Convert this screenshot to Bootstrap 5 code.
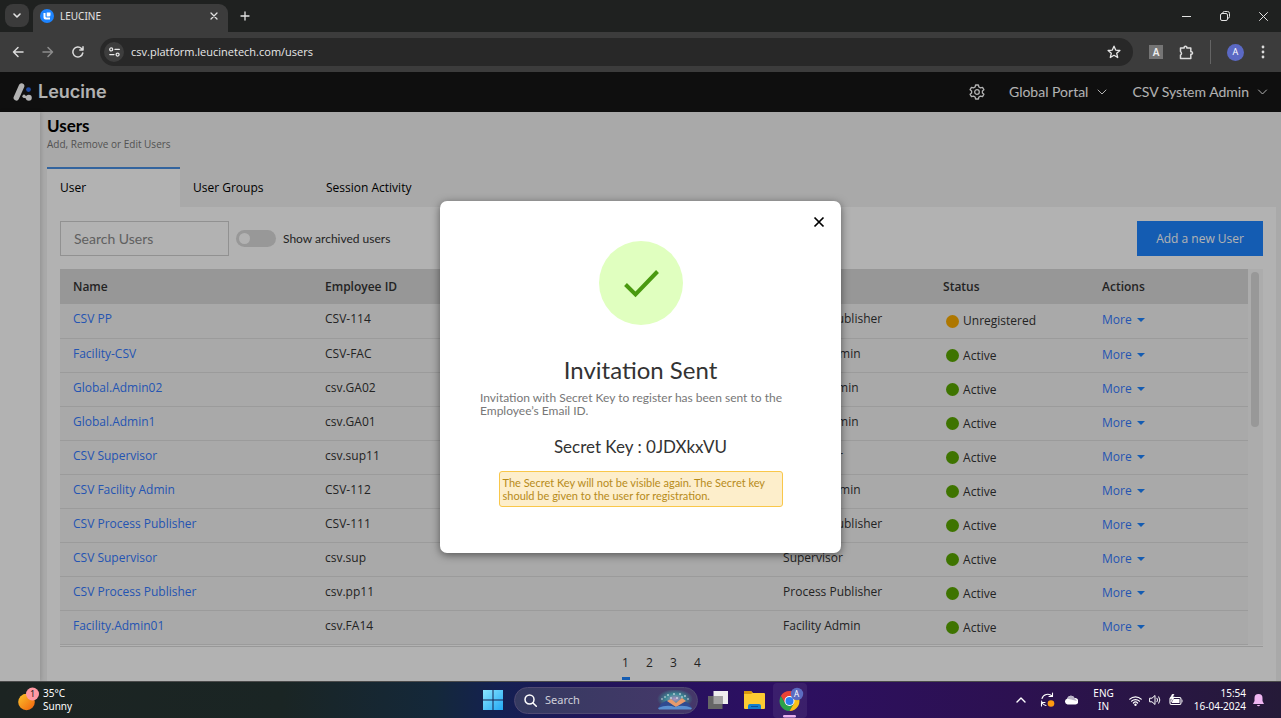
<!DOCTYPE html>
<html lang="en">
<head>
<meta charset="utf-8">
<meta name="viewport" content="width=device-width, initial-scale=1">
<title>LEUCINE</title>
<link href="https://cdn.jsdelivr.net/npm/bootstrap@5.3.0/dist/css/bootstrap.min.css" rel="stylesheet">
<style>
  body { font-family: "Open Sans", sans-serif; font-size: 12px; line-height: 16px; color: #333; height: 100vh; background: #f2f2f2; font-variant-ligatures: none; }
  button { font: inherit; color: inherit; background: none; border: 0; padding: 0; }
  svg { display: block; flex: none; }
  .sys { font-family: "Noto Sans", "Open Sans", sans-serif; font-size: 11px; line-height: 14px; }
  .ln { fill: none; stroke: currentColor; stroke-linecap: round; stroke-linejoin: round; }

  /* browser frame */
  .tabstrip { background: #1f2120; height: 32px; color: #e3e3e3; padding: 4px 13px 0 5px; }
  .tab-menu { width: 24px; height: 23px; border-radius: 8px; background: #3b3b3b; }
  .browser-tab { width: 195px; height: 28px; margin-left: 4px; border-radius: 9px 9px 0 0; background: #3c3c3c; padding: 0 10px 4px 7px; font-size: 10px; gap: 6px; }
  .win-btns { gap: 29px; }
  .toolbar { background: #3c3c3c; height: 40px; color: #dcdcdc; padding: 0 15px 0 12px; gap: 16px; }
  .nav-btns { gap: 18px; }
  .address { background: #282828; height: 28px; border-radius: 14px; color: #e8e8e8; padding: 0 12px 0 4px; gap: 7px; }
  .address input { font-family: "Open Sans", sans-serif; font-size: 11px; background: none; border: 0; color: inherit; outline: 0; padding: 0; min-width: 0; }
  .site-info { width: 20px; height: 20px; border-radius: 50%; background: #3d3d3d; }
  .ext { width: 14px; height: 14px; background: #757575; color: #eee; font-size: 10px; font-weight: 600; }
  .avatar { width: 17px; height: 17px; border-radius: 50%; background: #5b69c4; color: #fff; font-size: 9px; }

  /* application */
  .topbar { background: #161616; height: 40px; color: #fff; font: 14px/16px Lato, sans-serif; padding: 0 13px; }
  .brand { font-family: Inter, sans-serif; font-size: 18px; font-weight: 600; color: #fff; gap: 5px; }
  .rail { width: 40px; background: #fff; box-shadow: 1px 0 4px rgba(0,0,0,.15); }
  .workspace { padding: 6px 5px 0 7px; }
  .page-title { font: 700 17px/16px Lato, sans-serif; color: #000; margin: 0; }
  .page-sub { font-size: 10px; line-height: 16px; color: #777; margin: 2px 0 15px; }
  .section-tab { width: 133px; height: 40px; padding: 0 13px 1px; text-align: left; color: #000; border-top: 2px solid transparent; }
  .section-tab.active { background: #fff; border-top-color: #4a90e2; }
  .panel { background: #fff; padding: 14px 13px 0; }
  .filters { gap: 7px; }
  .filters label { font: 12px/16px Lato, sans-serif; }
  .search-box { width: 169px; height: 35px; border: 1px solid #d0d0d0; border-radius: 0; padding: 0 13px; font: 14px/16px Lato, sans-serif; background: #fff; }
  .search-box::placeholder { color: #8a8a8a; }
  .switch-input { appearance: none; width: 40px; height: 17px; margin: 0; border-radius: 9px; background: #dadada; padding: 3px; }
  .switch-input::before { content: ""; display: block; width: 11px; height: 11px; border-radius: 50%; background: #fff; }
  .add-btn { background: #1d84ff; color: #fff; width: 126px; height: 35px; border-radius: 0; }
  .table-area { margin-top: 13px; border-bottom: 1px solid #dadada; padding-bottom: 1px; }
  .user-table { table-layout: fixed; width: 100%; background: #f2f2f2; }
  .user-table th { background: #d8d8d8; height: 35px; padding: 0 13px; font-weight: 600; }
  .user-table td { height: 34px; padding: 7px 13px 0; vertical-align: top; border-bottom: 1px solid #dedede; white-space: nowrap; }
  .user-table td:nth-child(5) { padding-top: 9px; }
  .user-table td:nth-child(6) { padding-top: 8px; }
  .user-table a { color: #347aff; text-decoration: none; }
  .user-table .dropdown-toggle { display: block; color: #347aff; }
  .user-table .dropdown-toggle::after { border-top: 4px solid #1d84ff; border-left: 4px solid transparent; border-right: 4px solid transparent; margin-left: 5px; vertical-align: 2px; }
  .status { gap: 4px; padding-left: 3px; }
  .dot { width: 13px; height: 13px; border-radius: 50%; background: #5aa700; }
  .dot.pending { background: #f9ab00; }
  .scroll-track { width: 15px; padding: 3px 4px 0 3px; background: #f7f7f7; }
  .scroll-thumb { height: 155px; border-radius: 4px; background: #dadada; }
  .pager button { width: 8px; height: 33px; padding-top: 3px; border-bottom: 3px solid transparent; color: #333; }
  .pager button.active { border-color: #1d84ff; }

  /* invitation dialog */
  .backdrop-layer { position: absolute; inset: 0; background: rgba(0,0,0,.3); }
  .invite { width: 401px; font: 12px/13px Lato, sans-serif; background: #fff; border-radius: 7px; box-shadow: 0 2px 9px rgba(0,0,0,.5); padding: 15px 40px 46px; }
  .invite-close { align-self: flex-end; margin-right: -24px; color: #000; }
  .invite h2 { font-size: 24px; line-height: 30px; color: #333; font-weight: 400; margin: 30px 0 6px; }
  .invite-text { color: #777; margin: 0; }
  .secret { font-size: 17px; line-height: 24px; color: #333; margin: 18px 0 12px; }
  .notice { width: 284px; background: #fdeecb; border: 1px solid #f9c74a; border-radius: 3px; color: #b78b1a; font-size: 11px; padding: 4px 3px; }

  /* desktop taskbar */
  .taskbar { display: grid; grid-template-columns: 1fr auto 1fr; height: 37px; color: #fff; background: linear-gradient(90deg, #1c2422 0, #1a2524 22%, #14283a 34%, #142052 39%, #22145a 47%, #2d0f62 60%, #2c1150 80%, #251a38 100%); border-top: 1px solid #4a4a4a; padding: 0 9px 0 17px; }
  .two-line { line-height: 13px; }
  .tray { font-size: 10px; gap: 7px; }
  .task-search { width: 184px; height: 27px; border-radius: 14px; background: linear-gradient(90deg, #353a60, #46386a); border: 1px solid #504a72; font-size: 12px; padding: 0 4px 0 9px; margin: 0 10px; }
  .running { width: 34px; height: 35px; border-radius: 4px; background: rgba(255,255,255,.07); }
</style>
</head>
<body class="d-flex flex-column overflow-hidden">

<header class="sys">
  <div class="tabstrip d-flex">
    <button class="tab-menu d-flex align-items-center justify-content-center" aria-label="Search tabs"><svg width="8" height="6" viewBox="0 0 8 6"><path class="ln" stroke-width="1.6" d="M1 1l3 3 3-3"/></svg></button>
    <div class="browser-tab d-flex align-items-center">
      <svg width="14" height="14" viewBox="0 0 14 14"><circle cx="7" cy="7" r="7" fill="#1d84ff"/><path d="M3.500 4v4.500q0 2 2 2h4.500v-2H6.500q-1 0-1-1V4z" fill="#fff"/><path d="M6.700 3.500h3.800V6q0 1.500-1.500 1.500H6.700z" fill="#fff"/></svg>
      <span>LEUCINE</span>
      <button class="ms-auto" aria-label="Close tab"><svg width="8" height="8" viewBox="0 0 8 8"><path class="ln" stroke-width="1.300" d="M1 1l6 6M7 1L1 7"/></svg></button>
    </div>
    <button class="ms-2 ps-1 mb-1" aria-label="New tab"><svg width="10" height="10" viewBox="0 0 10 10"><path class="ln" stroke-width="1.300" d="M5 1v8M1 5h8"/></svg></button>
    <div class="win-btns d-flex align-items-center ms-auto mb-1">
      <button aria-label="Minimize"><svg width="9" height="9" viewBox="0 0 9 9"><path class="ln" d="M0 4.500h9"/></svg></button>
      <button aria-label="Restore"><svg width="10" height="10" viewBox="0 0 10 10"><rect class="ln" x=".5" y="2.500" width="7" height="7" rx="1.500"/><path class="ln" d="M2.500 2.500q0-2 2-2h3q2 0 2 2v3q0 2-2 2"/></svg></button>
      <button aria-label="Close window"><svg width="9" height="9" viewBox="0 0 9 9"><path class="ln" d="M.5.5l8 8M8.500.5l-8 8"/></svg></button>
    </div>
  </div>
  <div class="toolbar d-flex align-items-center">
    <div class="nav-btns d-flex">
      <button aria-label="Back"><svg width="12" height="12" viewBox="0 0 12 12"><path class="ln" stroke-width="1.500" d="M11 6H1.500M6 1.500L1.500 6 6 10.500"/></svg></button>
      <button class="opacity-50" aria-label="Forward"><svg width="12" height="12" viewBox="0 0 12 12"><path class="ln" stroke-width="1.500" d="M1 6h9.500M6 1.500L10.500 6 6 10.500"/></svg></button>
      <button aria-label="Reload"><svg width="12" height="12" viewBox="0 0 12 12"><path class="ln" stroke-width="1.500" d="M10.800 7A5 5 0 1 1 9.500 2.500L11 4M11 .8V4H7.800"/></svg></button>
    </div>
    <div class="address d-flex align-items-center flex-grow-1">
      <button class="site-info d-flex align-items-center justify-content-center" aria-label="Site information"><svg width="11" height="10" viewBox="0 0 11 10"><g class="ln" stroke-width="1.300"><circle cx="2.200" cy="2.400" r="1.500"/><path d="M6 2.400h4.300M.8 7.600H5"/><circle cx="8.600" cy="7.600" r="1.500"/></g></svg></button>
      <input class="flex-grow-1" type="text" aria-label="Address" value="csv.platform.leucinetech.com/users">
      <button aria-label="Bookmark"><svg width="14" height="14" viewBox="0 0 14 14"><path class="ln" stroke-width="1.300" d="M7 1.200l1.700 3.900 4.200.4-3.200 2.800 1 4.200L7 10.300l-3.700 2.200 1-4.200L1.100 5.500l4.200-.4z"/></svg></button>
    </div>
    <button class="ext d-flex align-items-center justify-content-center" aria-label="Extension A">A</button>
    <button aria-label="Extensions"><svg width="15" height="15" viewBox="0 0 15 15"><path class="ln" stroke-width="1.500" d="M1.500 3h3.700V2q1.300-1.500 2.600 0v1h4v3.700h1q1.500 1.300 0 2.600h-1V13.500H1.500V10q2-1.500 0-3.500z"/></svg></button>
    <span class="vr my-2"></span>
    <button class="avatar d-flex align-items-center justify-content-center" aria-label="Profile">A</button>
    <button aria-label="Browser menu"><svg width="6" height="14" viewBox="0 0 6 14" fill="currentColor"><circle cx="3" cy="2" r="1.400"/><circle cx="3" cy="7" r="1.400"/><circle cx="3" cy="12" r="1.400"/></svg></button>
  </div>
</header>

<div class="position-relative flex-grow-1 d-flex flex-column overflow-hidden">
  <nav class="topbar d-flex align-items-center flex-shrink-0">
    <a class="brand d-flex align-items-center text-decoration-none" href="#">
      <svg width="20" height="20" viewBox="0 0 20 20"><path d="M3.300 15.800L8.600 4" stroke="#fff" stroke-width="5.500" stroke-linecap="round"/><path d="M10.500 14.300q3 1.500 5 1" stroke="#fff" stroke-width="2.200" fill="none"/><circle cx="11" cy="14.200" r="1.600" fill="#fff"/><circle cx="15.800" cy="15.700" r="3" fill="#fff"/><circle cx="15.500" cy="7.600" r="2.400" fill="#2e6bea"/></svg>Leucine</a>
    <button class="ms-auto me-4" aria-label="Settings"><svg width="16" height="16" viewBox="0 0 16 16"><path class="ln" stroke-width="1.300" d="M6.600 1h2.800l.5 2 1.600.9 2-.6 1.400 2.400L13.400 7v2l1.500 1.300-1.400 2.400-2-.6-1.600.9-.5 2H6.600l-.5-2-1.600-.9-2 .6-1.400-2.400L2.600 9V7L1.100 5.700l1.400-2.400 2 .6L6.100 3z"/><circle class="ln" stroke-width="1.300" cx="8" cy="8" r="2.300"/></svg></button>
    <button class="d-flex align-items-center gap-2 me-4">Global Portal <svg width="12" height="7" viewBox="0 0 12 7"><path class="ln" d="M2 1l4 4 4-4"/></svg></button>
    <button class="d-flex align-items-center gap-2">CSV System Admin <svg width="11" height="7" viewBox="0 0 11 7"><path class="ln" d="M1.500 1l4 4 4-4"/></svg></button>
  </nav>

  <div class="d-flex flex-grow-1">
    <aside class="rail flex-shrink-0"></aside>
    <main class="workspace flex-grow-1 d-flex flex-column">
      <h1 class="page-title">Users</h1>
      <p class="page-sub">Add, Remove or Edit Users</p>
      <div class="d-flex" role="tablist">
        <button class="section-tab active" role="tab">User</button>
        <button class="section-tab" role="tab">User Groups</button>
        <button class="section-tab" role="tab">Session Activity</button>
      </div>
      <section class="panel flex-grow-1">
        <div class="filters d-flex align-items-center">
          <input class="search-box" type="text" placeholder="Search Users" aria-label="Search Users">
          <input class="switch-input" type="checkbox" role="switch" id="archived">
          <label for="archived">Show archived users</label>
          <button class="add-btn ms-auto">Add a new User</button>
        </div>
        <div class="table-area d-flex">
          <table class="user-table">
            <colgroup><col style="width:252px"><col style="width:170px"><col><col style="width:160px"><col style="width:159px"><col style="width:159px"></colgroup>
            <thead><tr><th>Name</th><th>Employee ID</th><th>Email</th><th>Role</th><th>Status</th><th>Actions</th></tr></thead>
            <tbody id="users"></tbody>
          </table>
          <div class="scroll-track flex-shrink-0"><div class="scroll-thumb"></div></div>
        </div>
        <div class="pager d-flex justify-content-center gap-3">
          <button class="active">1</button><button>2</button><button>3</button><button>4</button>
        </div>
      </section>
    </main>
  </div>

  <div class="backdrop-layer d-flex align-items-center justify-content-center">
    <div class="invite d-flex flex-column align-items-center" role="dialog" aria-labelledby="inviteTitle">
      <button class="invite-close" aria-label="Close"><svg width="12" height="12" viewBox="0 0 12 12"><path d="M1.500 1.500l9 9M10.500 1.500l-9 9" stroke="currentColor" stroke-width="1.700"/></svg></button>
      <svg class="mt-2" width="84" height="89" viewBox="0 0 84 89"><circle cx="42" cy="47" r="42" fill="#e0ffbf"/><path d="M26.500 48.500l10 10L58.500 35.500" fill="none" stroke="#4a9a10" stroke-width="4"/></svg>
      <h2 id="inviteTitle">Invitation Sent</h2>
      <p class="invite-text">Invitation with Secret Key to register has been sent to the Employee’s Email ID.</p>
      <p class="secret">Secret Key : 0JDXkxVU</p>
      <div class="notice">The Secret Key will not be visible again. The Secret key should be given to the user for registration.</div>
    </div>
  </div>
</div>

<footer class="taskbar sys flex-shrink-0">
  <div class="d-flex align-items-center gap-1">
    <svg width="22" height="26" viewBox="0 0 22 26"><defs><linearGradient id="sun" x1="0" y1="0" x2="1" y2="1"><stop offset="0" stop-color="#fcc42c"/><stop offset="1" stop-color="#f0600c"/></linearGradient></defs><circle cx="9.500" cy="15" r="8.300" fill="url(#sun)"/><circle cx="15.500" cy="7" r="6.500" fill="#ff99a4"/><text x="13" y="10" font-size="9" fill="#222">1</text></svg>
    <div class="two-line" style="font-size:10px">35°C<br>Sunny</div>
  </div>
  <div class="d-flex align-items-center">
    <button aria-label="Start"><svg width="22" height="20" viewBox="0 0 22 20"><defs><linearGradient id="win" x1="0" y1="0" x2="1" y2="1"><stop offset="0" stop-color="#8be6ff"/><stop offset="1" stop-color="#22a8f4"/></linearGradient></defs><path fill="url(#win)" d="M1 0h9.500v9.500H1zM11.500 0H21v9.500h-9.500zM1 10.500h9.500V20H1zM11.500 10.500H21V20h-9.500z"/></svg></button>
    <button class="task-search d-flex align-items-center"><svg width="13" height="13" viewBox="0 0 13 13"><circle class="ln" stroke-width="1.500" cx="5.500" cy="5.500" r="4.500"/><path class="ln" stroke-width="1.500" d="M9 9l3.300 3.300"/></svg><span class="ms-2 opacity-75" style="font-size:11px">Search</span>
      <svg class="ms-auto" width="36" height="20" viewBox="0 0 36 20"><defs><radialGradient id="aur"><stop offset="0" stop-color="#b08fc0"/><stop offset=".5" stop-color="#3c8a96"/><stop offset="1" stop-color="#3c8a96" stop-opacity="0"/></radialGradient></defs><ellipse cx="18" cy="9" rx="18" ry="10" fill="url(#aur)"/><path d="M1 18.500l3-5 6-3 8 6 8-6 6 3 3 5z" fill="#2f4a90"/><path d="M10 11l4-2 5 4 6-5 4 3-10 6z" fill="#e89a6c"/><path d="M1 18q9-4 17-1 8-3 17 1l-1 1.500H2z" fill="#5a8fd0"/><g fill="#fff"><circle cx="5" cy="9" r=".7"/><circle cx="8" cy="7" r=".7"/><circle cx="11" cy="5" r=".8"/><circle cx="14" cy="8" r=".8"/><circle cx="17" cy="4" r=".8"/><circle cx="20" cy="8" r=".8"/><circle cx="23" cy="4" r=".8"/><circle cx="25" cy="7" r=".7"/><circle cx="28" cy="6" r=".8"/><circle cx="31" cy="9" r=".7"/></g></svg></button>
    <button class="me-3" aria-label="Task view"><svg width="20" height="18" viewBox="0 0 20 18"><path d="M5.500 0H20v13H5.500z" fill="#eee"/><path d="M0 5h14.500v13H0z" fill="#666"/><path d="M5.500 5h9v8h-9z" fill="#a2a2a2"/></svg></button>
    <button class="me-2" aria-label="File Explorer"><svg width="21" height="18" viewBox="0 0 21 18"><path d="M0 1q0-1 1-1h6l2 2h11q1 0 1 1v14q0 1-1 1H1q-1 0-1-1z" fill="#fccb32"/><path d="M0 3V1q0-1 1-1h6l1.500 2L7 3z" fill="#d9980c"/><path d="M4 18v-3q0-2 2-2h9q2 0 2 2v3z" fill="#0f7fd0"/><path d="M7 15.500h7" stroke="#0a4f96" stroke-width="1"/></svg></button>
    <button class="running" aria-label="Chrome"><svg width="34" height="35" viewBox="0 0 34 35"><path d="M7.840 13A10 10 0 0 1 25.160 13H16.500L12.170 20.500z" fill="#ea4335"/><path d="M7.840 13A10 10 0 0 0 16.500 28L20.830 20.500h-8.660z" fill="#2ba24c"/><path d="M16.500 28A10 10 0 0 0 25.160 13H16.500l4.330 7.500z" fill="#fbc116"/><circle cx="16.500" cy="18" r="5" fill="#fff"/><circle cx="16.500" cy="18" r="4" fill="#2f7cf0"/><circle cx="24" cy="11" r="6.200" fill="#5c6bc0"/><text x="21" y="14" font-size="8" fill="#fff">A</text><rect x="10" y="32" width="13" height="2.500" rx="1.200" fill="#e9b0ee"/></svg></button>
  </div>
  <div class="tray d-flex align-items-center justify-content-end text-center">
    <button class="me-1" aria-label="Hidden icons"><svg width="12" height="6" viewBox="0 0 12 6"><path class="ln" stroke-width="1.400" d="M1 5l4-4 4 4"/></svg></button>
    <svg width="18" height="16" viewBox="0 0 18 16"><path class="ln" stroke-width="1.100" d="M3 6.500A6 6 0 0 1 13 4M13.500 1v3.500H10M2.500 9A6 6 0 0 0 7 13.500M2.500 14v-3.500H6"/><circle cx="12" cy="11.500" r="3.300" fill="#ff9a10"/></svg>
    <svg class="me-2" width="14" height="10" viewBox="0 0 14 10"><path d="M3.500 9.500a3 3 0 0 1-.5-5.800A4 4 0 0 1 10.500 3a3.200 3.200 0 0 1 1 6.500z" fill="#fff"/><path d="M3 3.700A4 4 0 0 1 10.500 3L13 6 7 4.500z" fill="#b9b3c6"/></svg>
    <span class="two-line me-2">ENG<br>IN</span>
    <svg width="13" height="11" viewBox="0 0 13 11"><path class="ln" stroke-width="1.200" d="M.8 4.200a8 8 0 0 1 11.400 0M2.600 6.200a5.500 5.500 0 0 1 7.800 0M4.400 8a3 3 0 0 1 4.200 0"/><circle cx="6.500" cy="9.700" r="1.200" fill="#fff"/></svg>
    <svg width="13" height="12" viewBox="0 0 13 12"><path class="ln" stroke-width="1" d="M1 4.200h2L6 1.500v9L3 7.800H1zM8 4.200q1.300 1.800 0 3.600M9.800 2.800q2.300 3.200 0 6.400"/></svg>
    <svg class="me-1" width="14" height="12" viewBox="0 0 14 12"><rect class="ln" stroke-width="1.100" x="1" y="3.500" width="11" height="7" rx="1.500"/><path d="M4.500 5H10.500v4h-8z" fill="#fff"/><path d="M13.300 5.700v2.600M3.500 0L1 4.500h2L2 8l3.500-5h-2L5 0z" fill="#fff" stroke="#fff" stroke-width=".6"/></svg>
    <span class="two-line text-end">15:54<br>16-04-2024</span>
    <svg class="me-2" width="11" height="13" viewBox="0 0 11 13"><path d="M5.500 0a4 4 0 0 1 4 4v3L11 10H0l1.500-3V4a4 4 0 0 1 4-4zM3.800 11h3.400q-1.700 2.500-3.400 0z" fill="#efb6f2"/></svg>
  </div>
</footer>

<script>
  const users = [
    ["CSV PP", "CSV-114", "Process Publisher", "Unregistered"],
    ["Facility-CSV", "CSV-FAC", "Facility Admin", "Active"],
    ["Global.Admin02", "csv.GA02", "Global Admin", "Active"],
    ["Global.Admin1", "csv.GA01", "Global Admin", "Active"],
    ["CSV Supervisor", "csv.sup11", "Supervisor", "Active"],
    ["CSV Facility Admin", "CSV-112", "Facility Admin", "Active"],
    ["CSV Process Publisher", "CSV-111", "Process Publisher", "Active"],
    ["CSV Supervisor", "csv.sup", "Supervisor", "Active"],
    ["CSV Process Publisher", "csv.pp11", "Process Publisher", "Active"],
    ["Facility.Admin01", "csv.FA14", "Facility Admin", "Active"]
  ];
  document.getElementById("users").innerHTML = users.map(([name, id, role, status]) => `
    <tr>
      <td><a href="#">${name}</a></td><td>${id}</td><td></td><td>${role}</td>
      <td><span class="status d-flex align-items-center"><span class="dot ${status === "Active" ? "" : "pending"}"></span>${status}</span></td>
      <td><button class="dropdown-toggle">More</button></td>
    </tr>`).join("");
</script>
<script src="https://cdn.jsdelivr.net/npm/bootstrap@5.3.0/dist/js/bootstrap.bundle.min.js"></script>
</body>
</html>
